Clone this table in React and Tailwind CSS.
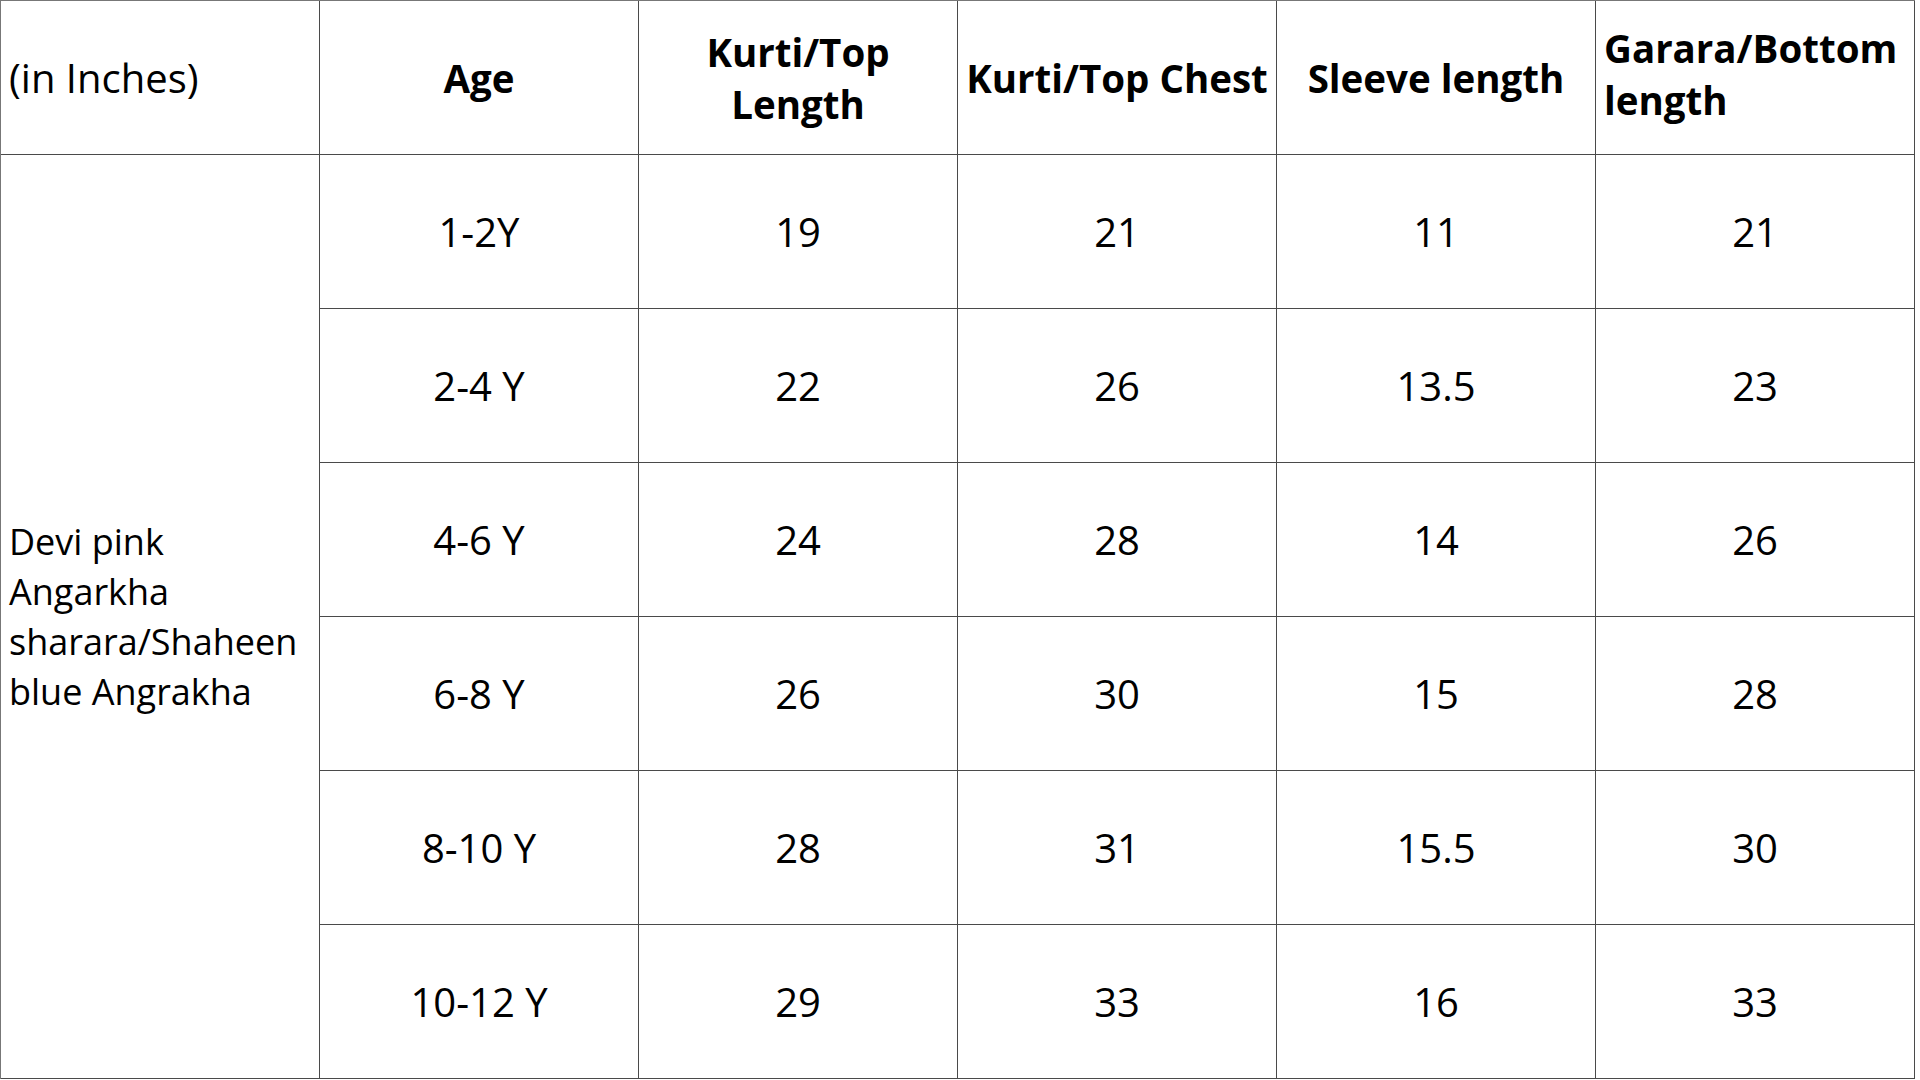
import React from "react";

const headers = ["Age", "Kurti/Top Length", "Kurti/Top Chest", "Sleeve length", "Garara/Bottom length"];

const rows = [
  ["1-2Y", "19", "21", "11", "21"],
  ["2-4 Y", "22", "26", "13.5", "23"],
  ["4-6 Y", "24", "28", "14", "26"],
  ["6-8 Y", "26", "30", "15", "28"],
  ["8-10 Y", "28", "31", "15.5", "30"],
  ["10-12 Y", "29", "33", "16", "33"],
];

const cell = "border-r border-b border-[#4a4a4a] flex items-center";

export default function App() {
  return (
    <div className="w-[1920px] h-[1080px] bg-white text-black font-['Open_Sans',sans-serif] overflow-hidden">
      <div className="grid grid-cols-[319px_319px_319px_319px_319px_319px] grid-rows-[154px_154px_154px_154px_154px_154px_154px] w-[1915px] border-l border-t border-[#777]">
        <div className={`${cell} px-[8px] text-[40px]`}>(in Inches)</div>
        {headers.map((h, i) => (
          <div
            key={h}
            className={`${cell} px-[8px] text-[38.5px] font-bold leading-[52px] ${
              i === 4 ? "justify-start text-left pb-[8px]" : "justify-center text-center"
            }`}
          >
            {h}
          </div>
        ))}
        <div className={`${cell} row-span-6 px-[8px] text-[36px] leading-[50px]`}>
          Devi pink Angarkha sharara/Shaheen blue Angrakha
        </div>
        {rows.map((r, ri) =>
          r.map((v, ci) => (
            <div key={`${ri}-${ci}`} className={`${cell} justify-center text-[40px]`}>
              {v}
            </div>
          ))
        )}
      </div>
    </div>
  );
}
